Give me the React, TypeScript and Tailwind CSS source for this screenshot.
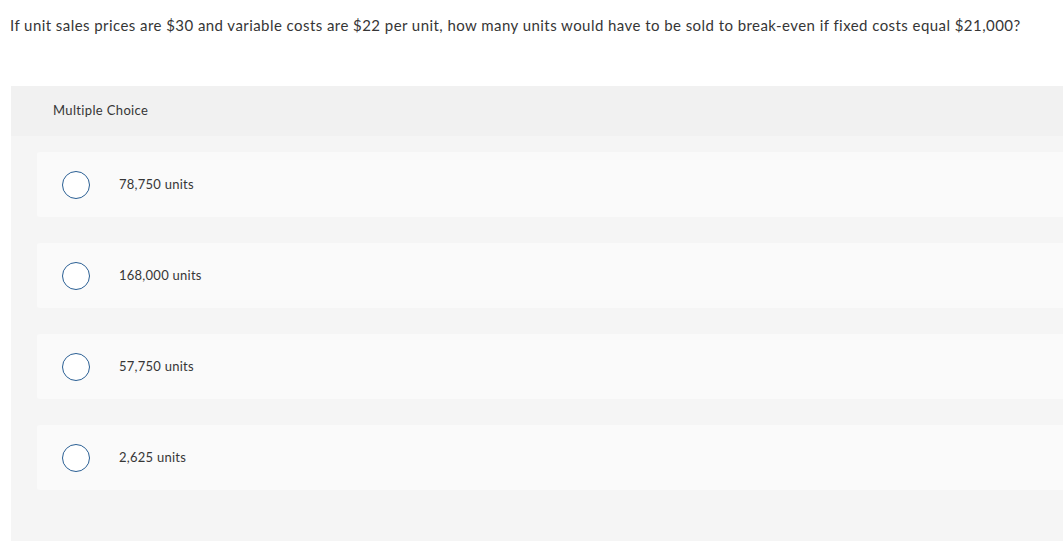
const options = ['78,750 units', '168,000 units', '57,750 units', '2,625 units'];

export default function App() {
  return (
    <div
      className="w-[1063px] h-[541px] overflow-hidden bg-white text-[#363636]"
      style={{ fontFamily: 'Lato, "Open Sans", sans-serif' }}
    >
      <p className="pl-[10px] pt-[15px] text-[15px] leading-[20px] tracking-[0.44px]">
        If unit sales prices are $30 and variable costs are $22 per unit, how many units would have to be sold to
        break-even if fixed costs equal $21,000?
      </p>

      <div className="ml-[11px] mt-[51px] w-[1070px] bg-[#f5f5f5] pb-[60px]">
        <div className="h-[50px] bg-[#f1f1f1] pl-[42px] flex items-center text-[13px] tracking-[0.35px]">
          Multiple Choice
        </div>
        <div className="pt-[16px] pl-[26px] flex flex-col gap-[26px]">
          {options.map((o) => (
            <div key={o} className="h-[65px] bg-[#fafafa] rounded-l-[3px] flex items-center">
              <span className="ml-[25px] w-[28px] h-[28px] rounded-full border-[1.5px] border-[#2a5f94] bg-white shrink-0" />
              <span className="ml-[29px] text-[13px] tracking-[0.25px]">{o}</span>
            </div>
          ))}
        </div>
      </div>
    </div>
  );
}
